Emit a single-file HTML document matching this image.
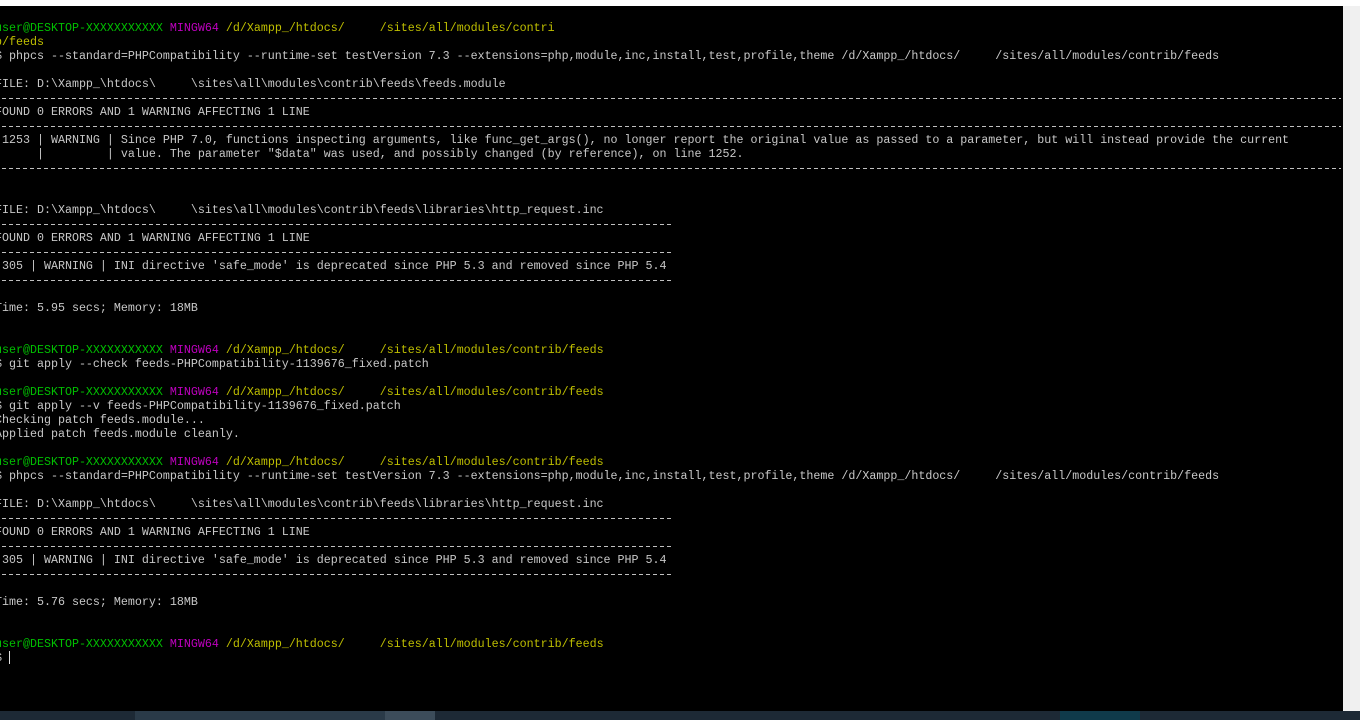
<!DOCTYPE html>
<html><head><meta charset="utf-8"><style>
html,body{margin:0;padding:0;background:#000;width:1360px;height:720px;overflow:hidden;position:relative}
.top{position:absolute;left:0;top:0;width:1360px;height:6px;background:#fff}
.sb{position:absolute;left:1343px;top:6px;width:17px;height:705px;background:#f0f0f0}
.tb{position:absolute;left:0;top:711px;width:1360px;height:9px;background:#1d2935}
.tb i{position:absolute;top:0;height:9px}
pre{position:absolute;left:-5px;top:21px;margin:0;font-family:"Liberation Mono",monospace;font-size:11.67px;line-height:14px;color:#c8c8c8;white-space:pre}
.g{color:#00bf00}.m{color:#bf00bf}.y{color:#bfbf00}
.d{display:inline-block;height:14px;vertical-align:top;background:repeating-linear-gradient(90deg,#c0c0c0 0 4px,transparent 4px 7px) 0 7px/100% 1px no-repeat}
.L{width:1346px}.S{width:679px}
.cur{display:inline-block;width:1px;height:13px;background:#e0e0e0;vertical-align:top}
</style></head><body>
<div class="top"></div>
<pre><span class="g">user@DESKTOP-XXXXXXXXXXX</span> <span class="m">MINGW64</span> <span class="y">/d/Xampp_/htdocs/     /sites/all/modules/contri</span>
<span class="y">b/feeds</span>
$ phpcs --standard=PHPCompatibility --runtime-set testVersion 7.3 --extensions=php,module,inc,install,test,profile,theme /d/Xampp_/htdocs/     /sites/all/modules/contrib/feeds

FILE: D:\Xampp_\htdocs\     \sites\all\modules\contrib\feeds\feeds.module
<span class="d L"></span>
FOUND 0 ERRORS AND 1 WARNING AFFECTING 1 LINE
<span class="d L"></span>
 1253 | WARNING | Since PHP 7.0, functions inspecting arguments, like func_get_args(), no longer report the original value as passed to a parameter, but will instead provide the current
      |         | value. The parameter "$data" was used, and possibly changed (by reference), on line 1252.
<span class="d L"></span>


FILE: D:\Xampp_\htdocs\     \sites\all\modules\contrib\feeds\libraries\http_request.inc
<span class="d S"></span>
FOUND 0 ERRORS AND 1 WARNING AFFECTING 1 LINE
<span class="d S"></span>
 305 | WARNING | INI directive 'safe_mode' is deprecated since PHP 5.3 and removed since PHP 5.4
<span class="d S"></span>

Time: 5.95 secs; Memory: 18MB


<span class="g">user@DESKTOP-XXXXXXXXXXX</span> <span class="m">MINGW64</span> <span class="y">/d/Xampp_/htdocs/     /sites/all/modules/contrib/feeds</span>
$ git apply --check feeds-PHPCompatibility-1139676_fixed.patch

<span class="g">user@DESKTOP-XXXXXXXXXXX</span> <span class="m">MINGW64</span> <span class="y">/d/Xampp_/htdocs/     /sites/all/modules/contrib/feeds</span>
$ git apply --v feeds-PHPCompatibility-1139676_fixed.patch
Checking patch feeds.module...
Applied patch feeds.module cleanly.

<span class="g">user@DESKTOP-XXXXXXXXXXX</span> <span class="m">MINGW64</span> <span class="y">/d/Xampp_/htdocs/     /sites/all/modules/contrib/feeds</span>
$ phpcs --standard=PHPCompatibility --runtime-set testVersion 7.3 --extensions=php,module,inc,install,test,profile,theme /d/Xampp_/htdocs/     /sites/all/modules/contrib/feeds

FILE: D:\Xampp_\htdocs\     \sites\all\modules\contrib\feeds\libraries\http_request.inc
<span class="d S"></span>
FOUND 0 ERRORS AND 1 WARNING AFFECTING 1 LINE
<span class="d S"></span>
 305 | WARNING | INI directive 'safe_mode' is deprecated since PHP 5.3 and removed since PHP 5.4
<span class="d S"></span>

Time: 5.76 secs; Memory: 18MB


<span class="g">user@DESKTOP-XXXXXXXXXXX</span> <span class="m">MINGW64</span> <span class="y">/d/Xampp_/htdocs/     /sites/all/modules/contrib/feeds</span>
$ <span class="cur"></span></pre>
<div class="sb"></div>
<div class="tb"><i style="left:135px;width:300px;background:#2a3a48"></i><i style="left:385px;width:50px;background:#3c4c5a"></i><i style="left:1060px;width:80px;background:#0f3a4a"></i></div>
</body></html>
